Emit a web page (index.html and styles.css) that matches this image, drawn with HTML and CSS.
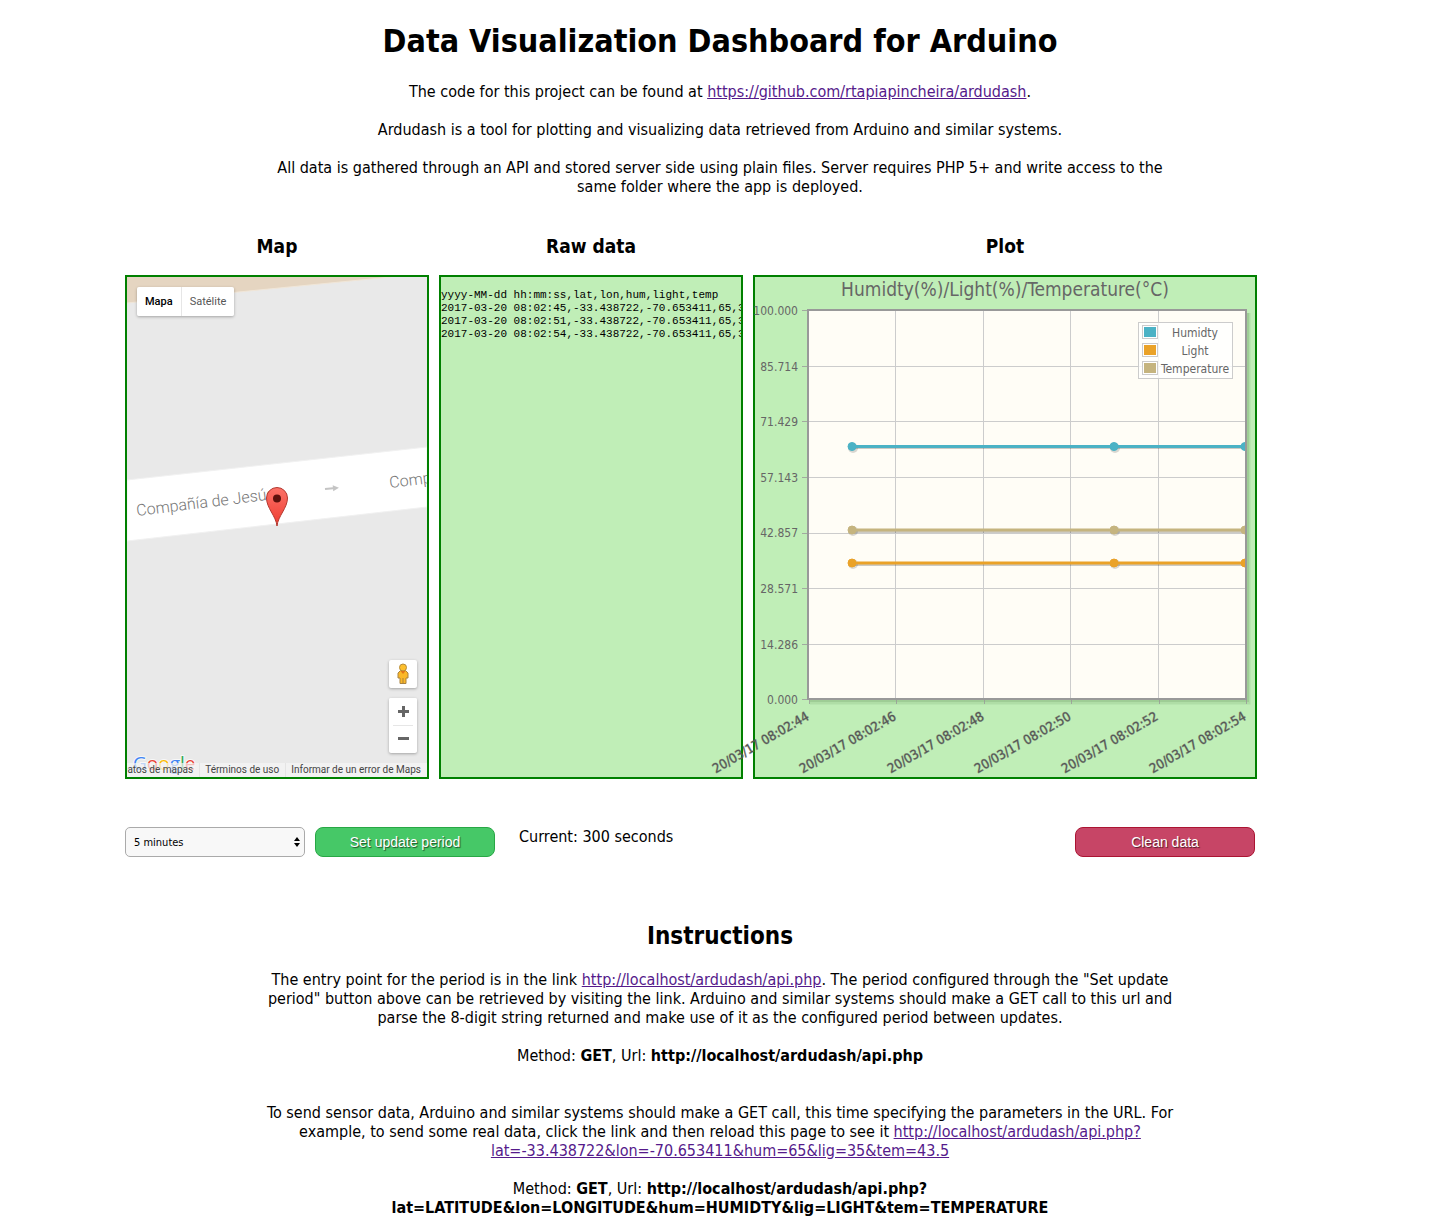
FILE: index.html
```html
<!DOCTYPE html>
<html lang="en">
<head>
<meta charset="utf-8">
<meta name="viewport" content="width=device-width, initial-scale=1">
<title>Ardudash</title>
<link rel="stylesheet" href="styles.css">
</head>
<body>
<main class="page">
  <header class="prose">
    <h1>Data Visualization Dashboard for Arduino</h1>
    <p>The code for this project can be found at <a href="https://github.com/rtapiapincheira/ardudash">https://github.com/rtapiapincheira/ardudash</a>.</p>
    <p>Ardudash is a tool for plotting and visualizing data retrieved from Arduino and similar systems.</p>
    <p>All data is gathered through an API and stored server side using plain files. Server requires PHP 5+ and write access to the same folder where the app is deployed.</p>
  </header>

  <div class="panels">
    <section class="column">
      <h3>Map</h3>
      <div class="panel map">
        <svg class="map-canvas" viewBox="0 0 300 500" role="img" aria-label="Street map">
          <rect width="300" height="500" fill="#e9e9e9"/>
          <path d="M0 0H264L0 26Z" fill="#e5d5c1"/>
          <path d="M0 26L264 0" stroke="#f0e6d8" fill="none"/>
          <path d="M0 203L300 170V230L0 264Z" fill="#fff" stroke="#f1f1f1"/>
          <g class="street">
            <text transform="translate(10 239) rotate(-7)">Compañía de Jesús</text>
            <text transform="translate(263 211) rotate(-7)">Compañía de Jesús</text>
          </g>
          <g transform="translate(198 212) rotate(-5)" fill="#c4c4c4">
            <path d="M0 -1H8V-3L14 0L8 3V1H0Z"/>
          </g>
          <path d="M150 249C149 239 139.500 231 139.500 221A10.500 10.500 0 0 1 160.500 221C160.500 231 151 239 150 249Z" fill="url(#pin)" stroke="#b3382f"/>
          <circle cx="150" cy="221.500" r="4" fill="#5c110c"/>
          <defs><linearGradient id="pin" x2="0" y2="1"><stop stop-color="#fb7268"/><stop offset="1" stop-color="#ef3b30"/></linearGradient></defs>
          <g class="google" transform="translate(6 493)">
            <text><tspan fill="#4285f4">G</tspan><tspan fill="#ea4335">o</tspan><tspan fill="#fbbc05">o</tspan><tspan fill="#4285f4">g</tspan><tspan fill="#34a853">l</tspan><tspan fill="#ea4335">e</tspan></text>
          </g>
        </svg>
        <div class="map-type">
          <button type="button" class="is-active">Mapa</button>
          <button type="button">Satélite</button>
        </div>
        <div class="map-tools">
          <button type="button" class="tool" aria-label="Street View">
            <svg width="12" height="22" viewBox="0 0 12 22"><path d="M3.500 7.500L1 10V15H3V20.500H9V15H11V10L8.500 7.500Z" fill="#fbb829" stroke="#a98341"/><circle cx="6" cy="4.500" r="3.500" fill="#fdbf2d" stroke="#b58b3a"/><path d="M3.500 8H8.500L6 11Z" fill="#e0761c"/><path d="M6 15V20" stroke="#a98341"/></svg>
          </button>
          <div class="zoom">
            <button type="button" class="tool" aria-label="Zoom in"><svg width="11" height="11" viewBox="0 0 11 11"><path d="M0 5.500H11M5.500 0V11" stroke="#666" stroke-width="3"/></svg></button>
            <button type="button" class="tool" aria-label="Zoom out"><svg width="11" height="11" viewBox="0 0 11 11"><path d="M0 5.500H11" stroke="#666" stroke-width="3"/></svg></button>
          </div>
        </div>
        <div class="map-legal"><a href="#datos">Datos de mapas</a><a href="#terminos">Términos de uso</a><a href="#informar">Informar de un error de Maps</a></div>
      </div>
    </section>

    <section class="column">
      <h3>Raw data</h3>
      <div class="panel raw">
<pre>yyyy-MM-dd hh:mm:ss,lat,lon,hum,light,temp
2017-03-20 08:02:45,-33.438722,-70.653411,65,35
2017-03-20 08:02:51,-33.438722,-70.653411,65,35
2017-03-20 08:02:54,-33.438722,-70.653411,65,35</pre>
      </div>
    </section>

    <section class="column column-wide">
      <h3>Plot</h3>
      <div class="panel">
        <svg class="chart" viewBox="0 0 500 500" role="img" aria-label="Humidity, light and temperature over time">
          <defs><clipPath id="area"><rect x="53" y="33" width="437" height="390"/></clipPath></defs>
          <text class="chart-title" x="250" y="19">Humidty(%)/Light(%)/Temperature(°C)</text>
          <path d="M492 36V424H55" fill="none" stroke="#3c6a34" stroke-opacity=".12" stroke-width="7"/>
          <path d="M492 36V423H55" fill="none" stroke="#3c6a34" stroke-opacity=".15" stroke-width="4"/>
          <rect x="53" y="33" width="437" height="389" fill="#fffdf6"/>
          <path class="grid" d="M140.500 33V422M228.500 33V422M315.500 33V422M403.500 33V422M53 89.500H490M53 144.500H490M53 200.500H490M53 256.500H490M53 311.500H490M53 367.500H490"/>
          <path class="ticks" d="M47 33.500H53M47 89.500H53M47 144.500H53M47 200.500H53M47 256.500H53M47 311.500H53M47 367.500H53M47 422.500H53M54.500 423V427M141.500 423V427M229.500 423V427M316.500 423V427M404.500 423V427M491.500 423V427"/>
          <rect x="53" y="33" width="438" height="389" fill="none" stroke="#999" stroke-width="2"/>
          <g clip-path="url(#area)">
            <g class="shade"><path d="M98 171H492M98 255H492M98 288H492"/><circle cx="98" cy="171" r="5"/><circle cx="360" cy="171" r="5"/><circle cx="98" cy="254" r="5"/><circle cx="360" cy="254" r="5"/><circle cx="98" cy="287" r="5"/><circle cx="360" cy="287" r="5"/></g>
            <g fill="#4bb2c5" stroke="#4bb2c5"><path d="M97 169.500H492" stroke-width="3"/><circle cx="97" cy="169.500" r="4"/><circle cx="359" cy="169.500" r="4"/><circle cx="490" cy="169.500" r="4"/></g>
            <g fill="#eaa228" stroke="#eaa228"><path d="M97 286H492" stroke-width="3"/><circle cx="97" cy="286" r="4"/><circle cx="359" cy="286" r="4"/><circle cx="490" cy="286" r="4"/></g>
            <g fill="#c5b47f" stroke="#c5b47f"><path d="M97 253H492" stroke-width="3"/><circle cx="97" cy="253" r="4"/><circle cx="359" cy="253" r="4"/><circle cx="490" cy="253" r="4"/></g>
          </g>
          <g class="y-axis"><text x="43" y="38">100.000</text><text x="43" y="94">85.714</text><text x="43" y="149">71.429</text><text x="43" y="205">57.143</text><text x="43" y="260">42.857</text><text x="43" y="316">28.571</text><text x="43" y="372">14.286</text><text x="43" y="427">0.000</text></g>
          <g class="x-axis">
            <text transform="translate(55 442) rotate(-30)">20/03/17 08:02:44</text>
            <text transform="translate(142 442) rotate(-30)">20/03/17 08:02:46</text>
            <text transform="translate(230 442) rotate(-30)">20/03/17 08:02:48</text>
            <text transform="translate(317 442) rotate(-30)">20/03/17 08:02:50</text>
            <text transform="translate(404 442) rotate(-30)">20/03/17 08:02:52</text>
            <text transform="translate(492 442) rotate(-30)">20/03/17 08:02:54</text>
          </g>
          <rect x="383.500" y="45.500" width="94" height="56" fill="#fff" fill-opacity=".8" stroke="#ccc"/>
          <g fill="#fff" stroke="#ccc"><rect x="387.500" y="48.500" width="15" height="13"/><rect x="387.500" y="66.500" width="15" height="13"/><rect x="387.500" y="84.500" width="15" height="13"/></g>
          <rect x="389" y="50" width="12" height="10" fill="#4bb2c5"/><rect x="389" y="68" width="12" height="10" fill="#eaa228"/><rect x="389" y="86" width="12" height="10" fill="#c5b47f"/>
          <g class="legend"><text x="440" y="60">Humidty</text><text x="440" y="78">Light</text><text x="440" y="96">Temperature</text></g>
        </svg>
      </div>
    </section>
  </div>

  <form class="controls">
    <div class="select">
      <select aria-label="Update period"><option>5 minutes</option><option>10 minutes</option></select>
      <svg class="arrows" width="6" height="10" viewBox="0 0 6 10"><path d="M0 4L3 0L6 4ZM0 6H6L3 10Z"/></svg>
    </div>
    <button type="button" class="button button-green">Set update period</button>
    <span class="current">Current: 300 seconds</span>
    <button type="button" class="button button-red">Clean data</button>
  </form>

  <section class="prose">
    <h2>Instructions</h2>
    <p>The entry point for the period is in the link <a href="http://localhost/ardudash/api.php">http://localhost/ardudash/api.php</a>. The period configured through the "Set update period" button above can be retrieved by visiting the link. Arduino and similar systems should make a GET call to this url and parse the 8-digit string returned and make use of it as the configured period between updates.</p>
    <p>Method: <b>GET</b>, Url: <b>http://localhost/ardudash/api.php</b></p>
    <p class="next">To send sensor data, Arduino and similar systems should make a GET call, this time specifying the parameters in the URL. For example, to send some real data, click the link and then reload this page to see it <a href="http://localhost/ardudash/api.php?lat=-33.438722&amp;lon=-70.653411&amp;hum=65&amp;lig=35&amp;tem=43.5">http://localhost/ardudash/api.php?<wbr>lat=-33.438722&amp;lon=-70.653411&amp;hum=65&amp;lig=35&amp;tem=43.5</a></p>
    <p>Method: <b>GET</b>, Url: <b>http://localhost/ardudash/api.php?<wbr>lat=LATITUDE&amp;lon=LONGITUDE&amp;hum=HUMIDTY&amp;lig=LIGHT&amp;tem=TEMPERATURE</b></p>
  </section>
</main>
</body>
</html>
```
FILE: styles.css
```css
* { box-sizing: border-box; }

body {
  margin: 0;
  background: #fff;
  color: #000;
  font: 16px/19px Tahoma, "DejaVu Sans Condensed", "Noto Sans", sans-serif;
}

.page { max-width: 1190px; margin: 0 auto; }

.prose { max-width: 914px; margin: 0 auto; text-align: center; }
.prose p { margin: 0 0 19px; }
.prose .next { margin-top: 38px; }

h1, h2, h3 { margin: 0; text-align: center; font-weight: bold; }
h1 { padding: 22px 0 21px; font-size: 32px; line-height: 39px; }
h2 { padding-bottom: 19px; font-size: 24px; line-height: 29px; }
h3 { padding: 20px 0 18px; font-size: 19px; line-height: 22px; }

a { color: #551a8b; }

.panels { display: flex; gap: 10px; }
.column { flex: 0 1 304px; min-width: 0; }
.column-wide { flex-basis: 504px; }

.panel {
  position: relative;
  height: 504px;
  border: 2px solid green;
  background: #c0eeb7;
}

.map { overflow: hidden; background: #e9e9e9; font-family: Roboto, sans-serif; }
.map-canvas { display: block; width: 300px; height: 500px; }
.street { font: 300 16px Roboto, sans-serif; fill: #777; }
.google { font: 500 19px "Open Sans", sans-serif; }
.google text { stroke: #fff; stroke-width: 2px; stroke-opacity: .7; paint-order: stroke; }

.map button { border: 0; margin: 0; padding: 0; background: #fff; color: #565656; font: 11px Roboto, sans-serif; }
.map-type {
  position: absolute; top: 10px; left: 10px;
  display: flex; height: 29px;
  border-radius: 2px; overflow: hidden;
  box-shadow: 0 1px 3px rgba(0, 0, 0, .3);
}
.map .map-type button { padding: 0 8px; }
.map .map-type .is-active { border-right: 1px solid #e6e6e6; color: #000; font-weight: 500; }

.map-tools { position: absolute; right: 10px; bottom: 24px; display: grid; gap: 10px; }
.map .tool { display: grid; place-items: center; width: 28px; height: 28px; border-radius: 2px; box-shadow: 0 1px 3px rgba(0, 0, 0, .3); }
.zoom { height: 55px; border-radius: 2px; background: #fff; box-shadow: 0 1px 3px rgba(0, 0, 0, .3); }
.map .zoom .tool { height: 27px; box-shadow: none; }
.zoom .tool + .tool::before { content: ""; position: absolute; width: 20px; height: 1px; margin-bottom: 27px; background: #e6e6e6; }

.map-legal {
  position: absolute; right: 0; bottom: 0;
  display: flex; height: 14px;
  font-size: 10px; line-height: 14px; white-space: nowrap;
}
.map-legal a { padding: 0 6px 0 5px; background: rgba(245, 245, 245, .7); color: #444; text-decoration: none; }
.map-legal a + a { border-left: 1px solid #e4e4e4; }

.raw { overflow: hidden; }
.raw pre { margin: 12px 0; font: 11px/13px "Courier New", "Liberation Mono", monospace; }

.chart { display: block; width: 500px; height: 500px; overflow: visible; fill: #666; }
.chart-title { font-size: 19px; text-anchor: middle; }
.grid { fill: none; stroke: #ccc; }
.ticks { fill: none; stroke: #999; stroke-opacity: .8; }
.shade { fill: #000; fill-opacity: .15; stroke: #000; stroke-opacity: .2; stroke-width: 2; }
.shade circle { stroke: none; }
.y-axis { font-size: 12px; text-anchor: end; }
.x-axis { font-size: 13px; text-anchor: end; fill: #555; stroke: #555; stroke-opacity: .4; }
.legend { font-size: 12px; text-anchor: middle; }

.controls { display: flex; gap: 10px; padding: 48px 60px 65px 0; }
.select { position: relative; width: 180px; }
.select select {
  width: 100%; height: 30px; padding: 0 8px;
  border: 1px solid #aaa; border-radius: 5px;
  appearance: none; background: #f8f8f8; color: #000;
  font: 11px Tahoma, "DejaVu Sans Condensed", sans-serif;
}
.arrows { position: absolute; top: 10px; right: 5px; pointer-events: none; }
.button {
  width: 180px; height: 30px; padding: 0;
  border: 1px solid; border-radius: 8px;
  color: #fff; font: 14px Arial, "Liberation Sans", sans-serif;
  text-shadow: 1px 1px 1px rgba(0, 0, 0, .6);
}
.button-green { border-color: #28a745; background: #46c867; }
.button-red { margin-left: auto; border-color: #ab1432; background: #c74566; }
.current { padding-left: 14px; }
```
